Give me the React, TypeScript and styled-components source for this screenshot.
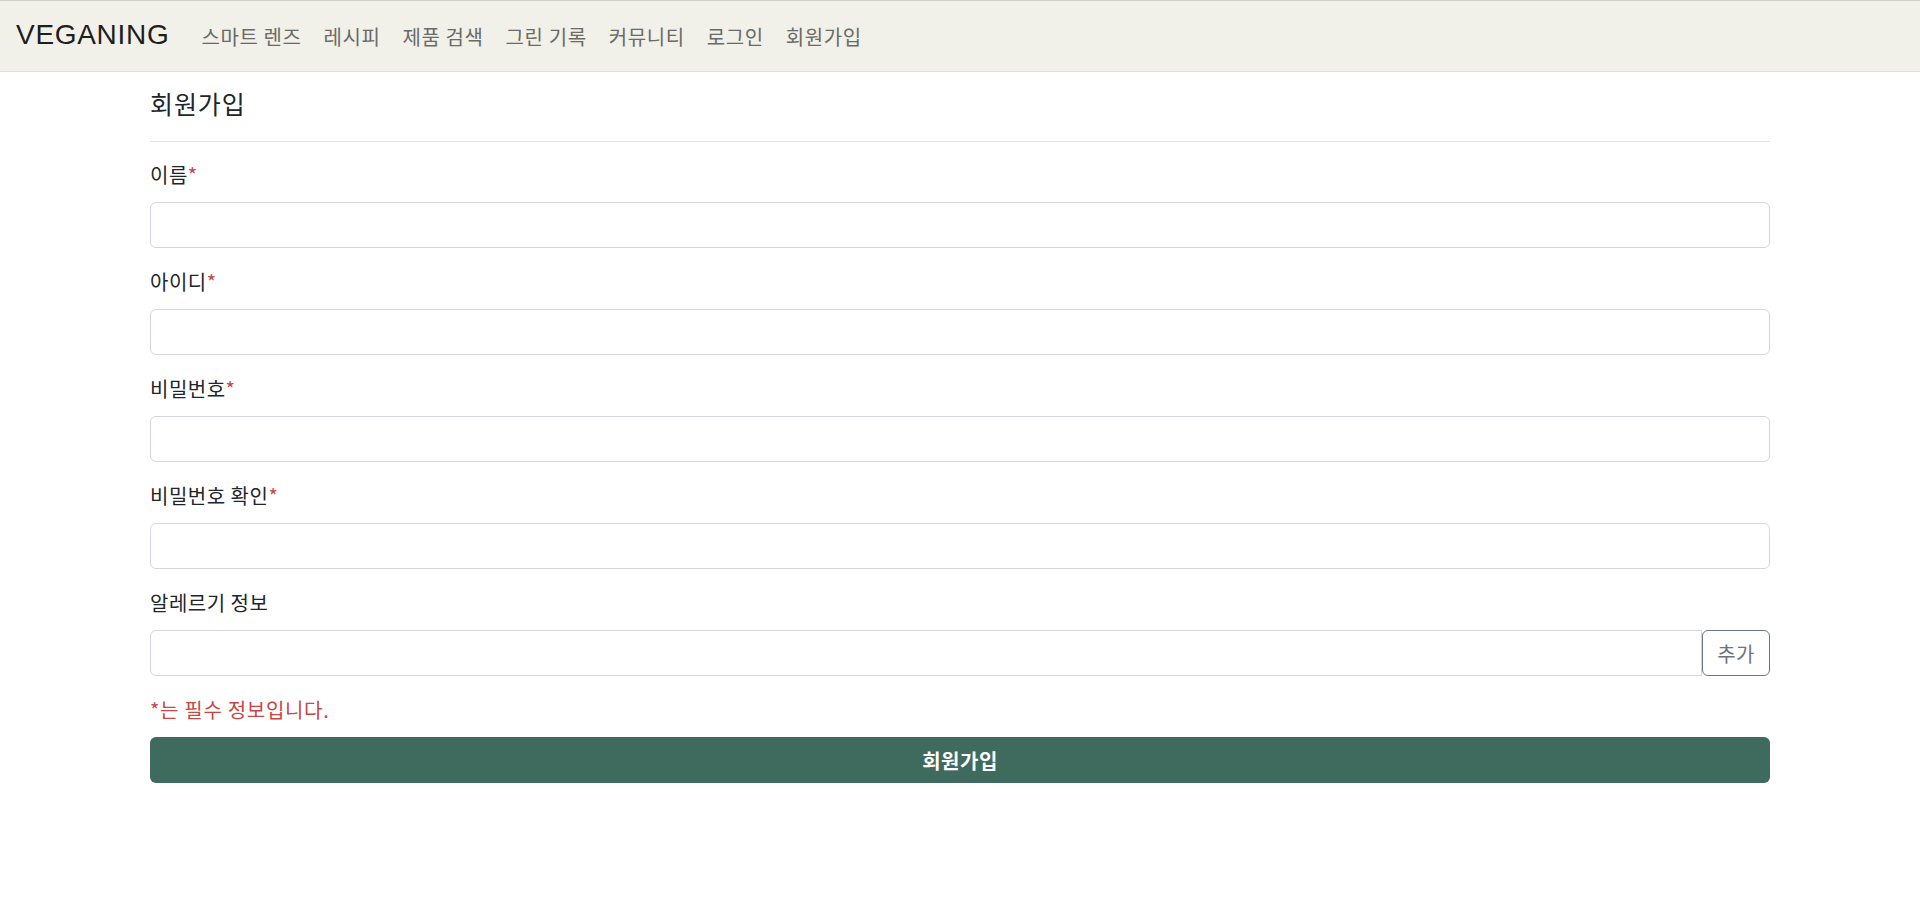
import React from 'react';
import styled, { createGlobalStyle } from 'styled-components';

const GlobalStyle = createGlobalStyle`
  * {
    box-sizing: border-box;
  }
  body {
    margin: 0;
    background: #fff;
    color: #212529;
    font-family: "Noto Sans CJK KR", "Noto Sans", sans-serif;
  }
`;

const Navbar = styled.nav`
  height: 72px;
  background-color: #f1f0e9;
  border-top: 1px solid #cfd0cc;
  border-bottom: 1px solid #dedede;
  display: flex;
  align-items: center;
  padding: 0 16px;
`;

const Brand = styled.a`
  font-family: "Liberation Sans", Arial, sans-serif;
  font-size: 28px;
  letter-spacing: 0.7px;
  color: rgba(0, 0, 0, 0.9);
  text-decoration: none;
  margin-right: 21px;
  padding-bottom: 2px;
`;

const NavList = styled.ul`
  display: flex;
  list-style: none;
  margin: 0;
  padding: 0;
`;

const NavLink = styled.a`
  display: block;
  padding: 8px 11px;
  font-size: 20px;
  letter-spacing: 0.6px;
  color: #6a6a66;
  text-decoration: none;
  cursor: pointer;
`;

const Container = styled.main`
  margin: 0 150px;
  padding-top: 13px;
`;

const Title = styled.h2`
  margin: 0;
  font-size: 25px;
  letter-spacing: 0.9px;
  font-weight: 400;
  line-height: 36px;
  padding-bottom: 20px;
  border-bottom: 1px solid #dee2e6;
  margin-bottom: 19px;
`;

const Field = styled.div`
  margin-bottom: 20px;
`;

const Label = styled.label`
  display: block;
  font-size: 20px;
  letter-spacing: 0.5px;
  line-height: 28px;
  margin-bottom: 13px;
`;

const Required = styled.span`
  color: #c64646;
`;

const Input = styled.input<{ $grouped?: boolean }>`
  display: block;
  width: 100%;
  height: 46px;
  padding: 6px 12px;
  font-size: 18px;
  font-family: inherit;
  border: 1px solid #d3d6da;
  border-radius: ${(p) => (p.$grouped ? '6px 0 0 6px' : '6px')};
  background: #fff;
  outline: none;
`;

const InputGroup = styled.div`
  display: flex;
  ${Input} {
    flex: 1;
  }
`;

const OutlineButton = styled.button`
  height: 46px;
  padding: 0 14px;
  font-family: inherit;
  font-size: 20px;
  letter-spacing: 0.5px;
  color: #6c757d;
  background: #fff;
  border: 1px solid #6c757d;
  border-radius: 6px;
  cursor: pointer;
`;

const Notice = styled.p`
  margin: 0 0 13px;
  font-size: 20px;
  letter-spacing: 0.7px;
  line-height: 28px;
  color: #c64646;
`;

const SubmitButton = styled.button`
  display: block;
  width: 100%;
  height: 46px;
  border: none;
  border-radius: 6px;
  background-color: #3f6a5e;
  color: #fff;
  font-family: inherit;
  font-size: 20px;
  letter-spacing: 0.5px;
  font-weight: 700;
  cursor: pointer;
`;

const navItems = ['스마트 렌즈', '레시피', '제품 검색', '그린 기록', '커뮤니티', '로그인', '회원가입'];

const fields = [
  { label: '이름', type: 'text' },
  { label: '아이디', type: 'text' },
  { label: '비밀번호', type: 'password' },
  { label: '비밀번호 확인', type: 'password' },
];

export default function App() {
  return (
    <>
      <GlobalStyle />
      <Navbar>
        <Brand href="#">VEGANING</Brand>
        <NavList>
          {navItems.map((item) => (
            <li key={item}>
              <NavLink>{item}</NavLink>
            </li>
          ))}
        </NavList>
      </Navbar>
      <Container>
        <Title>회원가입</Title>
        <form onSubmit={(e) => e.preventDefault()}>
          {fields.map((f) => (
            <Field key={f.label}>
              <Label>
                {f.label}
                <Required>*</Required>
              </Label>
              <Input type={f.type} />
            </Field>
          ))}
          <Field>
            <Label>알레르기 정보</Label>
            <InputGroup>
              <Input type="text" $grouped />
              <OutlineButton type="button">추가</OutlineButton>
            </InputGroup>
          </Field>
          <Notice>*는 필수 정보입니다.</Notice>
          <SubmitButton type="submit">회원가입</SubmitButton>
        </form>
      </Container>
    </>
  );
}
